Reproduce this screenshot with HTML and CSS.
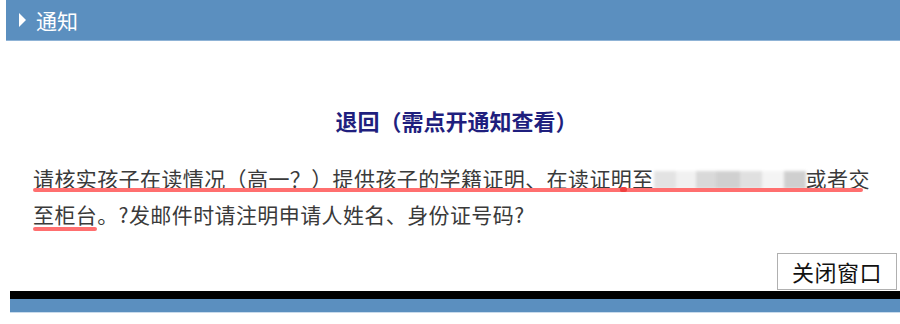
FILE: index.html
```html
<!DOCTYPE html>
<html lang="zh">
<head>
<meta charset="utf-8">
<link rel="stylesheet" href="styles.css">
</head>
<body>
<div class="page">
  <div class="hdr"><span class="tri"></span><span class="hdr-text">通知</span></div>
  <div class="content">
    <h2 class="title">退回（需点开通知查看）</h2>
    <div class="msg">
      <p class="msg-text">请核实孩子在读情况（高一？）提供孩子的学籍证明、在读证明至<span class="blur"><i class="b1"></i><i class="b2"></i><i class="b3"></i><i class="b4"></i><i class="b5"></i><i class="b6"></i><i class="b7"></i></span>或者交<br>至柜台。?发邮件时请注明申请人姓名、身份证号码?</p>
      <span class="mark mark1"></span>
      <span class="mark mark1b"></span>
      <span class="mark mark2"></span>
    </div>
    <div class="actions"><button class="btn">关闭窗口</button></div>
  </div>
  <div class="foot"></div>
</div>
</body>
</html>
```

FILE: styles.css
```css
* { box-sizing: border-box; }
html, body { margin: 0; padding: 0; background: #fff; }
body { font-family: "Noto Sans CJK SC", "Noto Sans", sans-serif; }
.page { width: 900px; height: 324px; overflow: hidden; }
.hdr {
  margin-left: 6px;
  height: 41px;
  background: #5b8fbf;
  border-bottom: 1px solid #8fb3d6;
  display: flex;
  align-items: center;
  padding-left: 13px;
  color: #fff;
  font-size: 21px;
}
.tri {
  width: 0; height: 0;
  border-top: 7px solid transparent;
  border-bottom: 7px solid transparent;
  border-left: 7px solid #fff;
  margin-right: 10px;
}
.hdr-text { line-height: 40px; }
.content { padding: 0 3px 0 33px; }
.title {
  margin: 64px 0 0 -33px;
  text-align: center;
  font-size: 22px;
  line-height: 30px;
  font-weight: bold;
  color: #1f1f7e;
  padding-left: 16px;
}
.msg { position: relative; margin-top: 25px; }
.msg-text {
  margin: 0;
  font-size: 21px;
  letter-spacing: 0.4px;
  line-height: 36px;
  color: #3a3a3a;
  white-space: nowrap;
}
.blur {
  display: inline-flex;
  width: 152px;
  height: 18px;
  vertical-align: -2px;
  filter: blur(1.5px);
  opacity: 0.7;
}
.blur i { display: block; height: 100%; }
.b1 { width: 22px; background: #d8d8d8; }
.b2 { width: 20px; background: #ececec; }
.b3 { width: 20px; background: #c9c9c9; }
.b4 { width: 24px; background: #bdbdbd; }
.b5 { width: 22px; background: #d4d4d4; }
.b6 { width: 22px; background: #f0f0f0; }
.b7 { width: 22px; background: #bcbcbc; }
.mark { position: absolute; background: #ff6f6f; border-radius: 2px; }
.mark1 { left: 0; top: 28px; width: 830px; height: 4px; }
.mark1b { left: 587px; top: 27px; width: 7px; height: 5px; background: #f0403f; }
.mark2 { left: 0; top: 67px; width: 64px; height: 4px; }
.actions { display: flex; justify-content: flex-end; margin-top: 21px; }
.btn {
  width: 120px;
  height: 37px;
  padding: 0;
  background: #fff;
  border: 1px solid #b0b0b0;
  font-family: "Noto Sans CJK SC", sans-serif;
  font-size: 22px;
  letter-spacing: 0.5px;
  line-height: 35px;
  color: #111;
}
.foot {
  margin: 1px 0 0 10px;
  height: 22px;
  border-top: 8px solid #000;
  background: #5b8fbf;
  border-bottom: 1px solid #c9dbec;
}
```
